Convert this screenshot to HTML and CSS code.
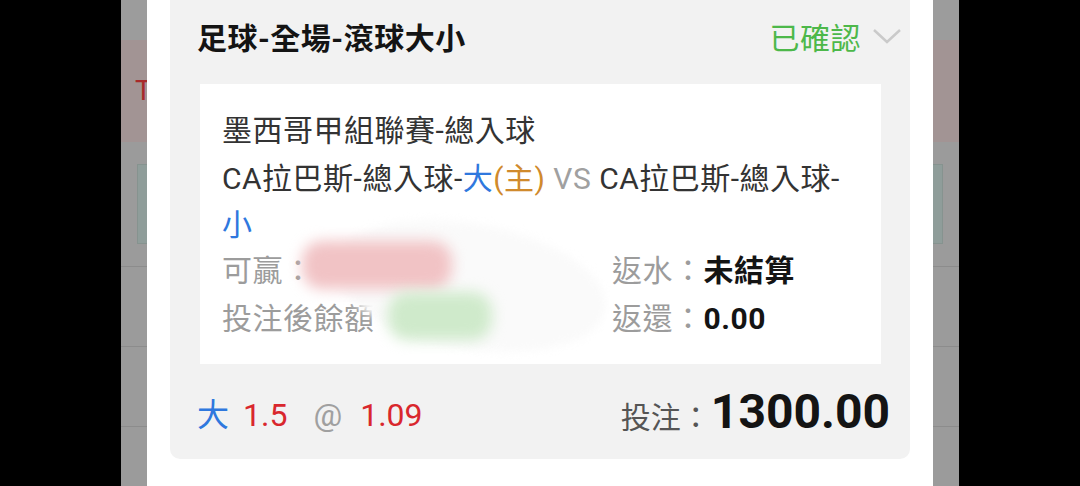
FILE: index.html
```html
<!DOCTYPE html>
<html lang="zh-Hant">
<head>
  <meta charset="UTF-8">
  <meta name="viewport" content="width=device-width, initial-scale=1.0">
  <title>注單詳情</title>
  <link rel="stylesheet" href="styles.css">
</head>
<body>
  <div class="device">
    <div class="bezel"></div>
    <div class="phone">
      <div class="bg-page">
        <div class="bg-top"></div>
        <div class="bg-alert"><span>T</span></div>
        <div class="bg-form"><div class="bg-input"></div></div>
        <div class="bg-row"></div>
        <div class="bg-row"></div>
      </div>

      <div class="sheet">
        <div class="bet-card">
          <div class="bet-head">
            <h2>足球-全場-滾球大小</h2>
            <div class="status">
              已確認
              <svg width="30" height="16" viewBox="0 0 30 16"><polyline points="2,2 15,14 28,2" fill="none" stroke="#cacaca" stroke-width="2.5"/></svg>
            </div>
          </div>

          <div class="bet-body">
            <p class="league">墨西哥甲組聯賽-總入球</p>
            <p class="match">CA拉巴斯-總入球-<span class="blue">大</span><span class="home">(主)</span> <span class="vs">VS</span> CA拉巴斯-總入球-<span class="blue">小</span></p>
            <div class="stats">
              <div><span class="label">可贏：</span></div>
              <div><span class="label">返水：</span><span class="value">未結算</span></div>
              <div><span class="label">投注後餘額</span></div>
              <div><span class="label">返還：</span><span class="value">0.00</span></div>
            </div>
            <!-- redacted amounts -->
            <div class="smear smear-white"></div>
            <div class="smear smear-red"></div>
            <div class="smear smear-green"></div>
          </div>

          <div class="bet-foot">
            <div class="pick">
              <span class="blue">大</span>
              <span class="red line">1.5</span>
              <span class="at">@</span>
              <span class="red odds">1.09</span>
            </div>
            <div class="stake">投注：<b>1300.00</b></div>
          </div>
        </div>
      </div>
    </div>
    <div class="bezel"></div>
  </div>
</body>
</html>
```

FILE: styles.css
```css
* { margin: 0; padding: 0; box-sizing: border-box; }
body {
  font-family: Roboto, "Noto Sans CJK TC", sans-serif;
  background: #000;
  overflow: hidden;
}
.device {
  display: flex;
  height: 486px;
}
.bezel {
  width: 121px;
  flex: none;
  background: #000;
}
.phone {
  position: relative;
  width: 838px;
  flex: none;
  background: #9b9b9b;
  overflow: hidden;
}

/* dimmed page behind the sheet */
.bg-top {
  height: 40px;
  background: #9c9c9c;
}
.bg-alert {
  height: 102px;
  background: #a29494;
  padding: 36px 0 0 14px;
  color: #a82a2a;
  font-size: 28px;
  line-height: 30px;
}
.bg-form {
  height: 125px;
  padding: 22px 16px;
  border-bottom: 1px solid #8c8c8c;
}
.bg-input {
  height: 80px;
  background: #8f9d9a;
  border: 1px solid #86938f;
}
.bg-row {
  height: 80px;
  border-bottom: 1px solid #8c8c8c;
}

/* bottom sheet */
.sheet {
  position: absolute;
  top: 0;
  bottom: 0;
  left: 26px;
  right: 26px;
  background: #fff;
  padding: 0 23px;
}
.bet-card {
  height: 459px;
  background: #f2f2f2;
  border-radius: 0 0 10px 10px;
  display: flex;
  flex-direction: column;
}
.bet-head {
  height: 84px;
  flex: none;
  display: flex;
  justify-content: space-between;
  align-items: center;
  padding: 0 8px 12px 27px;
}
.bet-head h2 {
  font-size: 30px;
  letter-spacing: 0.5px;
  font-weight: 700;
  color: #141414;
}
.status {
  display: flex;
  align-items: center;
  gap: 11px;
  font-size: 30px;
  letter-spacing: 0.5px;
  color: #4db84a;
}
.bet-body {
  position: relative;
  height: 280px;
  flex: none;
  margin: 0 29px 0 30px;
  padding: 24px 22px 0;
  background: #fff;
  overflow: hidden;
}
.league,
.match {
  font-size: 30px;
  letter-spacing: 0.5px;
  line-height: 46px;
  color: #333;
}
.league { margin-bottom: 2px; }
.blue { color: #2f78de; }
.red { color: #d9272d; }
.home { color: #d08a2c; }
.vs { color: #a0a0a0; }
.stats {
  display: grid;
  grid-template-columns: 390px 1fr;
  font-size: 30px;
  letter-spacing: 0.5px;
  line-height: 48px;
  margin-top: -1px;
}
.label { color: #9c9c9c; }
.value {
  color: #141414;
  font-weight: 700;
}
.smear {
  position: absolute;
  border-radius: 50%;
}
.smear-white {
  left: 133px;
  top: 140px;
  width: 274px;
  height: 124px;
  background: #fafafa;
  transform: rotate(10deg);
  filter: blur(4px);
}
.smear-red {
  left: 102px;
  top: 157px;
  width: 150px;
  height: 48px;
  border-radius: 20px;
  background: #f1c3c5;
  filter: blur(7px);
}
.smear-green {
  left: 188px;
  top: 208px;
  width: 104px;
  height: 48px;
  border-radius: 20px;
  background: #cfeacb;
  filter: blur(7px);
}
.bet-foot {
  flex: 1;
  display: flex;
  justify-content: space-between;
  align-items: center;
  padding: 0 20px 0 27px;
}
.pick {
  font-size: 32px;
  display: flex;
  align-items: baseline;
}
.line { margin-left: 14px; }
.at {
  color: #a0a0a0;
  margin-left: 26px;
}
.odds { margin-left: 18px; }
.stake {
  display: flex;
  align-items: baseline;
  font-size: 30px;
  color: #555;
}
.stake b {
  font-size: 48px;
  color: #141414;
}
```
